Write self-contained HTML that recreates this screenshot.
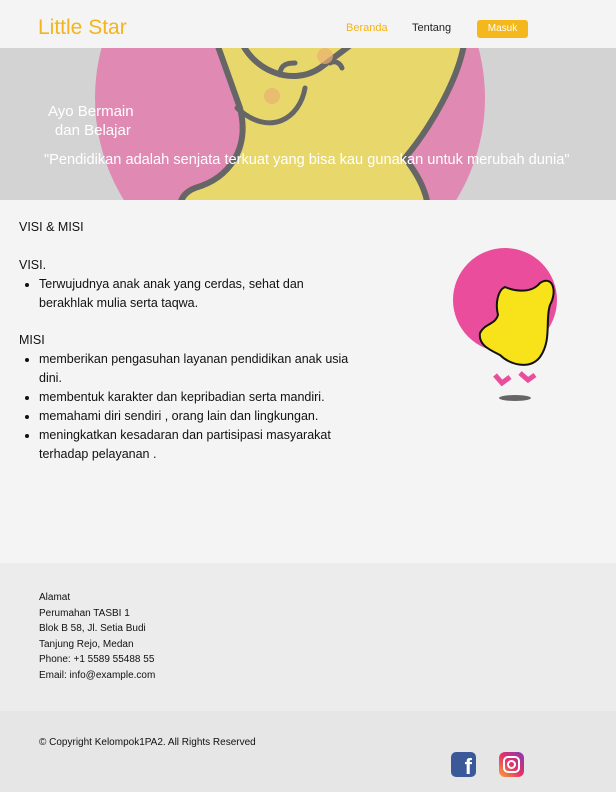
<!DOCTYPE html>
<html><head><meta charset="utf-8"><style>
*{margin:0;padding:0;box-sizing:border-box}
body{width:616px;height:792px;background:#f4f4f4;font-family:"Liberation Sans",sans-serif;color:#111;position:relative;overflow:hidden}
.a{position:absolute}
.nav{top:0;left:0;width:616px;height:48px;background:#f4f4f4}
.hero{top:48px;left:0;width:616px;height:152px;background:#d4d3d4;overflow:hidden}
p,li{font-size:12.5px;line-height:19px}
ul{padding-left:20px}
</style></head><body>
<div class="a nav">
<div class="a" style="left:38px;top:16px;font-size:21px;color:#f4b41c">Little Star</div>
<div class="a" style="left:346px;top:22px;font-size:11px;color:#f4b41c">Beranda</div>
<div class="a" style="left:412px;top:22px;font-size:11px;color:#222">Tentang</div>
<div class="a" style="left:477px;top:20px;width:51px;height:18px;background:#f4b81c;border-radius:3px;color:#fff;font-size:10px;text-align:center;line-height:18px">Masuk</div>
</div>
<div class="a hero">
<svg width="616" height="152" class="a" style="left:0;top:0">
<circle cx="290" cy="50" r="195" fill="#df89b3"/>
<path d="M215 -10 L240 60 C250 100 230 130 195 140 C170 150 180 175 200 200 L420 200 C440 160 420 130 405 110 C430 80 460 30 465 -10 Z" fill="#e8d86c" stroke="#666" stroke-width="6"/>
<path d="M240 -10 C250 20 290 40 320 20 L360 -10" fill="#e8d86c" stroke="#666" stroke-width="6"/>
<path d="M237 60 C270 90 300 70 305 40 M280 27 C280 15 290 15 295 15 M330 15 C335 12 340 15 342 20" fill="none" stroke="#666" stroke-width="5" stroke-linecap="round"/>
<circle cx="272" cy="48" r="8" fill="#eab070" opacity=".7"/>
<circle cx="325" cy="8" r="8" fill="#eab070" opacity=".7"/>
</svg>
<div class="a" style="left:48px;top:54px;font-size:15px;color:#fff;line-height:19px;text-align:center">Ayo Bermain<br>&nbsp;dan Belajar</div>
<div class="a" style="left:44px;top:104px;font-size:14.6px;color:#fff;white-space:nowrap">"Pendidikan adalah senjata terkuat yang bisa kau gunakan untuk merubah dunia"</div>
</div>
<div class="a" style="left:19px;top:218px"><p>VISI &amp; MISI</p></div>
<div class="a" style="left:19px;top:256px;width:330px">
<p>VISI.</p>
<ul><li>Terwujudnya anak anak yang cerdas, sehat dan berakhlak mulia serta taqwa.</li></ul>
<p style="margin-top:18px">MISI</p>
<ul><li>memberikan pengasuhan layanan pendidikan anak usia dini.</li><li>membentuk karakter dan kepribadian serta mandiri.</li><li>memahami diri sendiri , orang lain dan lingkungan.</li><li>meningkatkan kesadaran dan partisipasi masyarakat terhadap pelayanan .</li></ul>
</div>
<svg class="a" style="left:440px;top:245px" width="130" height="165">
<circle cx="65" cy="55" r="52" fill="#e94d9c"/>
<path d="M65 42 C72 45 90 50 100 38 C112 30 118 45 110 60 C105 75 112 95 100 112 C90 125 70 120 60 110 C50 105 38 100 40 88 C45 78 55 80 58 70 C55 58 58 45 65 42Z" fill="#f8e21a" stroke="#111" stroke-width="2"/>
<path d="M55 130 L62 138 L70 132 M80 128 L88 135 L95 130" stroke="#e94d9c" stroke-width="5" fill="none"/>
<ellipse cx="75" cy="153" rx="16" ry="3" fill="#666"/>
</svg>
<div class="a" style="top:563px;left:0;width:616px;height:148px;background:#ececec">
<div class="a" style="left:39px;top:27px;font-size:10px;line-height:15.6px">Alamat<br>Perumahan TASBI 1<br>Blok B 58, Jl. Setia Budi<br>Tanjung Rejo, Medan<br>Phone: +1 5589 55488 55<br>Email: info@example.com</div>
</div>
<div class="a" style="top:711px;left:0;width:616px;height:81px;background:#e6e6e6">
<div class="a" style="left:39px;top:26px;font-size:10px">© Copyright Kelompok1PA2. All Rights Reserved</div>
<div class="a" style="left:451px;top:41px;width:25px;height:25px;background:#3b5998;border-radius:5px;color:#fff;font-weight:bold;font-size:22px;text-align:right;padding-right:4px;line-height:30px;overflow:hidden">f</div>
<div class="a" style="left:499px;top:41px;width:25px;height:25px;border-radius:6px;background:linear-gradient(45deg,#f9a334,#e1306c,#833ab4)"><div class="a" style="left:4px;top:4px;width:17px;height:17px;border:2px solid #fff;border-radius:5px"></div><div class="a" style="left:8px;top:8px;width:9px;height:9px;border:2px solid #fff;border-radius:50%"></div></div>
</div>
</body></html>
